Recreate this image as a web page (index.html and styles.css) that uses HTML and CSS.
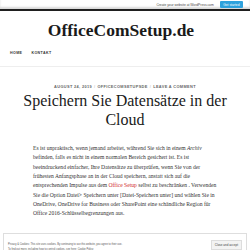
FILE: index.html
```html
<!DOCTYPE html>
<html lang="de">
<head>
<meta charset="utf-8">
<title>OfficeComSetup.de</title>
<link rel="stylesheet" href="styles.css">
</head>
<body>
<div class="masterbar">
  <span class="mb-text">Create your website at WordPress.com</span>
  <span class="mb-btn">Get started</span>
</div>
<header class="site-header">
  <div class="site-title">OfficeComSetup.de</div>
  <nav class="main-nav">
    <a href="#">HOME</a>
    <a href="#">KONTAKT</a>
  </nav>
</header>
<main class="content">
  <div class="entry-meta">
    <span>AUGUST 24, 2019</span><span class="sep">/</span><span>OFFICECOMSETUPSDE</span><span class="sep">/</span><span>LEAVE A COMMENT</span>
  </div>
  <h1 class="entry-title">Speichern Sie Datensätze in der Cloud</h1>
  <div class="entry-content">
    <p>Es ist unpraktisch, wenn jemand arbeitet, während Sie sich in einem <em>Archiv</em><br>befinden, falls es nicht in einem normalen Bereich gesichert ist. Es ist<br>beeindruckend einfacher, Ihre Datensätze zu überprüfen, wenn Sie von der<br>frühesten Anfangsphase an in der Cloud speichern, anstatt sich auf die<br>entsprechenden Impulse aus dem <a href="#">Office Setup</a> selbst zu beschränken . Verwenden<br>Sie die Option Datei&gt; Speichern unter [Datei-Speichern unter] und wählen Sie in<br>OneDrive, OneDrive for Business oder SharePoint eine schändliche Region für<br>Office 2016-Schlüsselbegrenzungen aus.</p>
  </div>
</main>
<div class="cookie-banner">
  <div class="cookie-text">Privacy &amp; Cookies: This site uses cookies. By continuing to use this website, you agree to their use.<br>To find out more, including how to control cookies, see here: Cookie Policy</div>
  <span class="cookie-btn">Close and accept</span>
</div>
</body>
</html>
```
FILE: styles.css
```css
html, body {
  margin: 0;
  padding: 0;
  background: #fff;
}
body {
  font-family: "Liberation Serif", "Times New Roman", serif;
  color: #2a2a2a;
  width: 250px;
  height: 250px;
  overflow: hidden;
}
.masterbar {
  height: 9px;
  display: flex;
  justify-content: flex-end;
  align-items: center;
  gap: 6px;
  padding-right: 7px;
  border-bottom: 2px solid #1f1f1f;
  box-shadow: inset 0 -2px 2px rgba(0,0,0,0.15);
  font-family: "Liberation Sans", Arial, sans-serif;
}
.mb-text {
  font-size: 3.3px;
  color: #444;
}
.mb-btn {
  font-size: 3.3px;
  color: #fff;
  background: #2ea1dc;
  padding: 1.8px 3.5px;
  border-radius: 1px;
}
.site-header {
  border-bottom: 1px solid #eeeeee;
}
.site-title {
  text-align: center;
  font-size: 17.5px;
  font-weight: bold;
  color: #1a1a1a;
  padding-top: 10px;
  padding-right: 8px;
  line-height: 18px;
}
.main-nav {
  display: flex;
  gap: 9px;
  padding: 12px 10px 11px;
}
.main-nav a {
  font-family: "Liberation Sans", Arial, sans-serif;
  font-size: 3.6px;
  font-weight: bold;
  letter-spacing: 0.4px;
  color: #333;
  text-decoration: none;
}
.content {
  width: 186px;
  margin: 0 auto;
}
.entry-meta {
  text-align: center;
  font-family: "Liberation Sans", Arial, sans-serif;
  font-size: 3.9px;
  font-weight: bold;
  letter-spacing: 0.35px;
  color: #666;
  padding-top: 17px;
  line-height: 5px;
  white-space: nowrap;
  margin: 0 -20px;
}
.entry-meta .sep {
  color: #ccc;
  margin: 0 2px;
}
.entry-title {
  margin: 2px -22px 0;
  text-align: center;
  font-size: 16px;
  font-weight: normal;
  line-height: 19px;
  color: #1a1a1a;
}
.entry-content {
  margin: 15px -30px 0 1px;
  font-size: 5.6px;
  line-height: 9.33px;
  color: #333;
  white-space: nowrap;
}
.entry-content p {
  margin: 0;
}
.entry-content a {
  color: #d02a2a;
  text-decoration: none;
}
.cookie-banner {
  position: fixed;
  left: 3px;
  right: 3px;
  top: 233px;
  height: 30px;
  background: #fff;
  border: 1px solid #dedede;
  display: flex;
  justify-content: space-between;
  align-items: flex-start;
  padding: 6px 4px 0;
  font-family: "Liberation Sans", Arial, sans-serif;
}
.cookie-text {
  font-size: 2.6px;
  line-height: 5px;
  color: #555;
  padding-top: 2px;
}
.cookie-btn {
  font-size: 3px;
  color: #444;
  background: #f3f3f3;
  border: 1px solid #ddd;
  padding: 2px 3px;
  white-space: nowrap;
}
```
